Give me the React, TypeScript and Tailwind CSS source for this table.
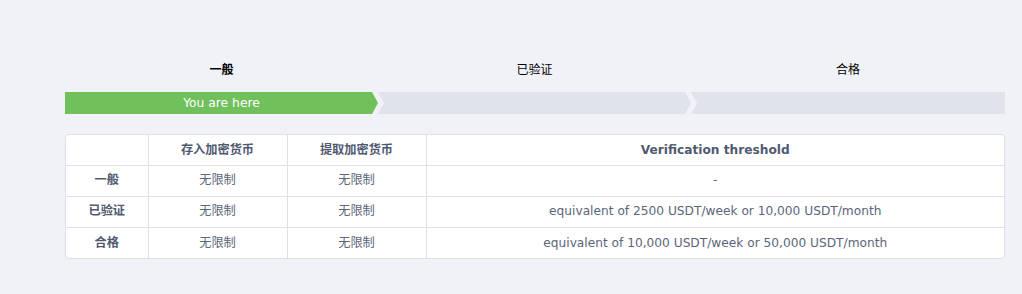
const levels = [
  { name: "一般", deposit: "无限制", withdraw: "无限制", threshold: "-" },
  {
    name: "已验证",
    deposit: "无限制",
    withdraw: "无限制",
    threshold: "equivalent of 2500 USDT/week or 10,000 USDT/month",
  },
  {
    name: "合格",
    deposit: "无限制",
    withdraw: "无限制",
    threshold: "equivalent of 10,000 USDT/week or 50,000 USDT/month",
  },
];

const font = "font-['DejaVu_Sans','Noto_Sans_CJK_SC',sans-serif]";

export default function App() {
  return (
    <div className={`min-h-[294px] w-[1022px] bg-[#f1f2f7] pt-[62px] pl-[65px] ${font}`}>
      <div className="w-[940px]">
        {/* step labels */}
        <div className="flex text-[12px] leading-[16px] text-black">
          <div className="w-[313px] text-center font-bold">一般</div>
          <div className="w-[313px] text-center">已验证</div>
          <div className="flex-1 text-center">合格</div>
        </div>

        {/* progress bar */}
        <div className="mt-[14px] flex h-[22px]">
          <div className="flex w-[313px] items-center justify-center bg-[#70c05b] text-[12.3px] text-white [clip-path:polygon(0_0,calc(100%-6px)_0,100%_50%,calc(100%-6px)_100%,0_100%)]">
            You are here
          </div>
          <div className="w-[313px] bg-[#e0e3eb] [clip-path:polygon(0_0,calc(100%-6px)_0,100%_50%,calc(100%-6px)_100%,0_100%,6px_50%)]" />
          <div className="flex-1 bg-[#e0e3eb] [clip-path:polygon(0_0,100%_0,100%_100%,0_100%,6px_50%)]" />
        </div>

        {/* limits table */}
        <div className="mt-[20px] w-[940px] overflow-hidden rounded-[4px] border border-[#dde0e8] bg-white text-[12.2px]">
          <table className="w-full table-fixed border-collapse">
            <colgroup>
              <col className="w-[82px]" />
              <col className="w-[139px]" />
              <col className="w-[139px]" />
              <col />
            </colgroup>
            <thead>
              <tr className="h-[30px] font-bold text-[#4f5a70]">
                <th />
                <th className="border-l border-[#dde0e8]">存入加密货币</th>
                <th className="border-l border-[#dde0e8]">提取加密货币</th>
                <th className="border-l border-[#dde0e8]">Verification threshold</th>
              </tr>
            </thead>
            <tbody>
              {levels.map((row) => (
                <tr key={row.name} className="h-[31px] border-t border-[#dde0e8] text-center text-[#5b6579]">
                  <td className="font-bold text-[#4f5a70]">{row.name}</td>
                  <td className="border-l border-[#dde0e8]">{row.deposit}</td>
                  <td className="border-l border-[#dde0e8]">{row.withdraw}</td>
                  <td className="border-l border-[#dde0e8]">{row.threshold}</td>
                </tr>
              ))}
            </tbody>
          </table>
        </div>
      </div>
    </div>
  );
}
